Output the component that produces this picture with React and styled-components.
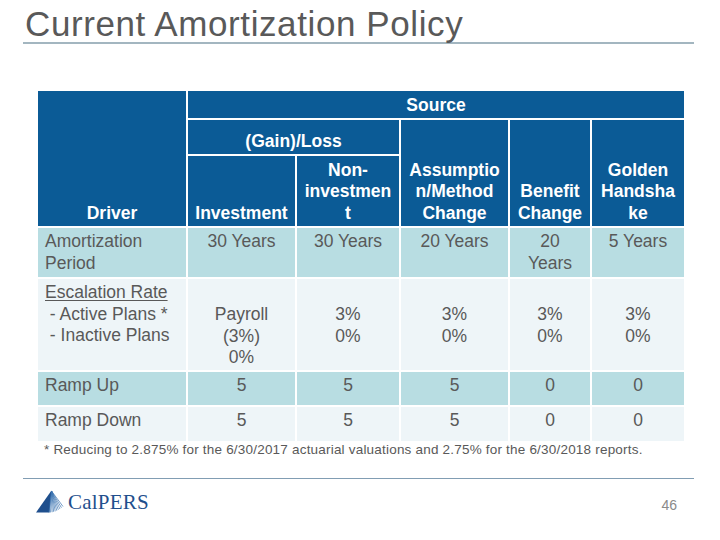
import React from 'react'
import styled, { createGlobalStyle } from 'styled-components'

const GlobalStyle = createGlobalStyle`
  html, body {
    margin: 0;
    padding: 0;
    background: #ffffff;
  }
  body {
    font-family: "Liberation Sans", Arial, sans-serif;
  }
`

const Slide = styled.div`
  width: 720px;
  height: 540px;
  display: flex;
  flex-direction: column;
  overflow: hidden;
`

const Header = styled.div`
  margin: 5px 26px 0 23px;
  padding-left: 2px;
  border-bottom: 2px solid #a3b6c0;
`

const Title = styled.h1`
  margin: 0;
  font-size: 35px;
  line-height: 37px;
  font-weight: normal;
  color: #595959;
  letter-spacing: 0.6px;
`

const Grid = styled.div`
  margin: 47px 0 0 38px;
  width: 646px;
  display: grid;
  grid-template-columns: 148px 107px 102px 107px 80px 92px;
  grid-template-rows: 27px 34px 70px 49px 91px 33px 34px;
  gap: 2px;
  background: #ffffff;
`

const HeadCell = styled.div`
  grid-column: ${p => p.$col || 'auto'};
  grid-row: ${p => p.$row || 'auto'};
  background: #0b5b96;
  color: #ffffff;
  font-weight: bold;
  font-size: 17.5px;
  line-height: 21.5px;
  text-align: center;
  white-space: nowrap;
  display: flex;
  flex-direction: column;
  justify-content: flex-end;
  padding: 0 4px 2px;
`

const Cell = styled.div`
  background: ${p => (p.$shade ? '#b8dde2' : '#eef5f8')};
  color: #595959;
  font-size: 17.5px;
  line-height: 21.5px;
  text-align: ${p => (p.$left ? 'left' : 'center')};
  padding: ${p => (p.$drop ? '25px' : '3px')} 4px 0 ${p => (p.$left ? '7px' : '4px')};
  white-space: pre;
`

const Under = styled.span`
  text-decoration: underline;
  text-underline-offset: 2px;
`

const Footnote = styled.p`
  margin: 1px 0 0 44px;
  font-size: 13.5px;
  line-height: 15px;
  letter-spacing: 0.2px;
  color: #595959;
`

const Rule = styled.div`
  margin: 21px 26px 0 23px;
  border-top: 1px solid #819db3;
`

const Footer = styled.div`
  display: flex;
  justify-content: space-between;
  align-items: flex-end;
  padding: 11px 43px 0 36px;
`

const Logo = styled.div`
  display: flex;
  align-items: flex-end;
  gap: 4px;
  color: #1f4f8d;
`

const LogoText = styled.span`
  font-family: "Liberation Serif", "Times New Roman", serif;
  font-size: 21px;
  line-height: 21px;
  letter-spacing: 0.2px;
`

const PageNum = styled.span`
  font-size: 14px;
  line-height: 16px;
  color: #8a8a8a;
`

// mountain mark: solid left face, fanned rays on the right
function Peak() {
  const rays = []
  for (let i = 0; i < 10; i++) {
    const t = i / 9
    const x = 13 + t * 14
    const y = 22.5 - t * t * 6
    rays.push(<line key={i} x1="15.5" y1="1" x2={x} y2={y} stroke="#3a73b0" strokeWidth="0.7" />)
  }
  return (
    <svg width="28" height="23" viewBox="0 0 28 23">
      <polygon points="15.5,0.5 0,22.5 13.5,22.5" fill="#1f4f8d" />
      {rays}
    </svg>
  )
}

const rows = [
  { label: 'Amortization\nPeriod', shade: true, values: ['30 Years', '30 Years', '20 Years', '20\nYears', '5 Years'] },
  {
    label: 'escalation',
    shade: false,
    drop: true,
    values: ['Payroll\n(3%)\n0%', '3%\n0%', '3%\n0%', '3%\n0%', '3%\n0%'],
  },
  { label: 'Ramp Up', shade: true, values: ['5', '5', '5', '0', '0'] },
  { label: 'Ramp Down', shade: false, values: ['5', '5', '5', '0', '0'] },
]

export default function App() {
  return (
    <Slide>
      <GlobalStyle />
      <Header>
        <Title>Current Amortization Policy</Title>
      </Header>

      <Grid>
        <HeadCell $col="1" $row="1 / 4">Driver</HeadCell>
        <HeadCell $col="2 / 7" $row="1">Source</HeadCell>
        <HeadCell $col="2 / 4" $row="2">(Gain)/Loss</HeadCell>
        <HeadCell $col="4" $row="2 / 4">Assumptio<br />n/Method<br />Change</HeadCell>
        <HeadCell $col="5" $row="2 / 4">Benefit<br />Change</HeadCell>
        <HeadCell $col="6" $row="2 / 4">Golden<br />Handsha<br />ke</HeadCell>
        <HeadCell $col="2" $row="3">Investment</HeadCell>
        <HeadCell $col="3" $row="3">Non-<br />investmen<br />t</HeadCell>

        {rows.map(row => (
          <React.Fragment key={row.label}>
            <Cell $left $shade={row.shade}>
              {row.label === 'escalation' ? (
                <>
                  <Under>Escalation Rate</Under>
                  {'\n - Active Plans *\n - Inactive Plans'}
                </>
              ) : (
                row.label
              )}
            </Cell>
            {row.values.map((v, i) => (
              <Cell key={i} $shade={row.shade} $drop={row.drop}>{v}</Cell>
            ))}
          </React.Fragment>
        ))}
      </Grid>

      <Footnote>* Reducing to 2.875% for the 6/30/2017 actuarial valuations and 2.75% for the 6/30/2018 reports.</Footnote>

      <Rule />
      <Footer>
        <Logo>
          <Peak />
          <LogoText>CalPERS</LogoText>
        </Logo>
        <PageNum>46</PageNum>
      </Footer>
    </Slide>
  )
}
